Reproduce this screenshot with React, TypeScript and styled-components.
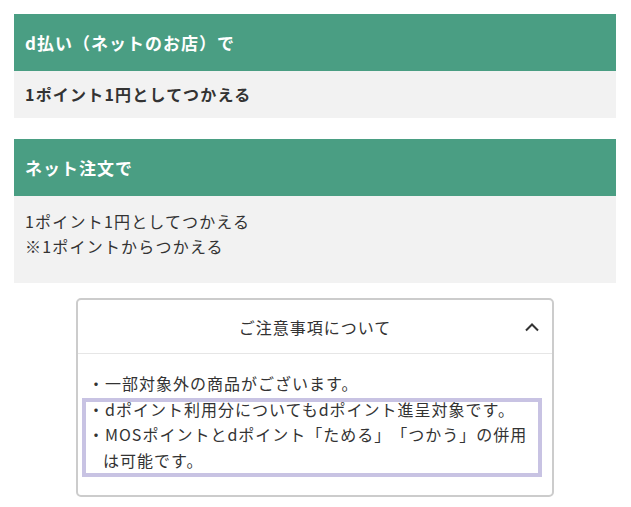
import React from 'react';
import styled, { createGlobalStyle } from 'styled-components';

const GlobalStyle = createGlobalStyle`
  html, body {
    margin: 0;
    padding: 0;
    background: #fff;
  }
  body {
    font-family: 'Noto Sans CJK JP', 'Noto Sans', sans-serif;
    color: #333;
    text-spacing-trim: space-all;
  }
`;

const Page = styled.div`
  padding: 14px 15px 14px 14px;
  width: 602px;
`;

// Point usage panel
const Panel = styled.section`
  margin-bottom: 21px;
`;

const PanelHeader = styled.h2`
  margin: 0;
  height: 57px;
  display: flex;
  align-items: center;
  padding: 0 11px;
  background: #4a9e83;
  color: #fff;
  font-size: 17px;
  font-weight: bold;
  letter-spacing: 1px;
  line-height: 25px;
`;

const PanelBody = styled.div<{ $bold?: boolean; $padTop: number; $padBottom: number }>`
  background: #f2f2f2;
  padding: ${p => p.$padTop}px 11px ${p => p.$padBottom}px;
  font-size: 16px;
  line-height: 25px;
  letter-spacing: 1.2px;
  font-weight: ${p => (p.$bold ? 'bold' : 'normal')};
`;

const Line = styled.p`
  margin: 0;
`;

// Notes accordion
const Accordion = styled.div`
  width: 478px;
  margin: -6px auto 0;
  box-sizing: border-box;
  border: 2px solid #ccc;
  border-radius: 5px;
  background: #fff;
`;

const AccordionHeader = styled.div`
  position: relative;
  height: 53px;
  display: flex;
  align-items: center;
  justify-content: center;
  border-bottom: 1px solid #e6e6e6;
  font-size: 16px;
  letter-spacing: 1px;
`;

const Chevron = styled.svg`
  position: absolute;
  right: 12px;
  top: 50%;
  margin-top: -6px;
`;

const AccordionBody = styled.div`
  padding: 17px 10px 22px;
`;

const NoteList = styled.ul`
  position: relative;
  margin: 0;
  padding: 0 6px 0 0;
  list-style: none;
  font-size: 16px;
  line-height: 25.5px;
  letter-spacing: 1px;
`;

const NoteItem = styled.li`
  padding-left: 15px;
  text-indent: -15px;
`;

const Highlight = styled.div`
  position: absolute;
  left: -6px;
  right: 0;
  top: 27px;
  bottom: -4px;
  border: 4px solid #c8c3e3;
  pointer-events: none;
`;

export default function App() {
  return (
    <>
      <GlobalStyle />
      <Page>
        <Panel>
          <PanelHeader>d払い（ネットのお店）で</PanelHeader>
          <PanelBody $bold $padTop={11} $padBottom={11}>
            <Line>1ポイント1円としてつかえる</Line>
          </PanelBody>
        </Panel>
        <Panel>
          <PanelHeader>ネット注文で</PanelHeader>
          <PanelBody $padTop={13} $padBottom={24}>
            <Line>1ポイント1円としてつかえる</Line>
            <Line>※1ポイントからつかえる</Line>
          </PanelBody>
        </Panel>
        <Accordion>
          <AccordionHeader>
            ご注意事項について
            <Chevron width="16" height="12" viewBox="0 0 16 12">
              <path d="M2 9.5 L8 3.5 L14 9.5" fill="none" stroke="#333" strokeWidth="2" />
            </Chevron>
          </AccordionHeader>
          <AccordionBody>
            <NoteList>
              <NoteItem>・一部対象外の商品がございます。</NoteItem>
              <NoteItem>・dポイント利用分についてもdポイント進呈対象です。</NoteItem>
              <NoteItem>・MOSポイントとdポイント「ためる」「つかう」の併用は可能です。</NoteItem>
              <Highlight />
            </NoteList>
          </AccordionBody>
        </Accordion>
      </Page>
    </>
  );
}
